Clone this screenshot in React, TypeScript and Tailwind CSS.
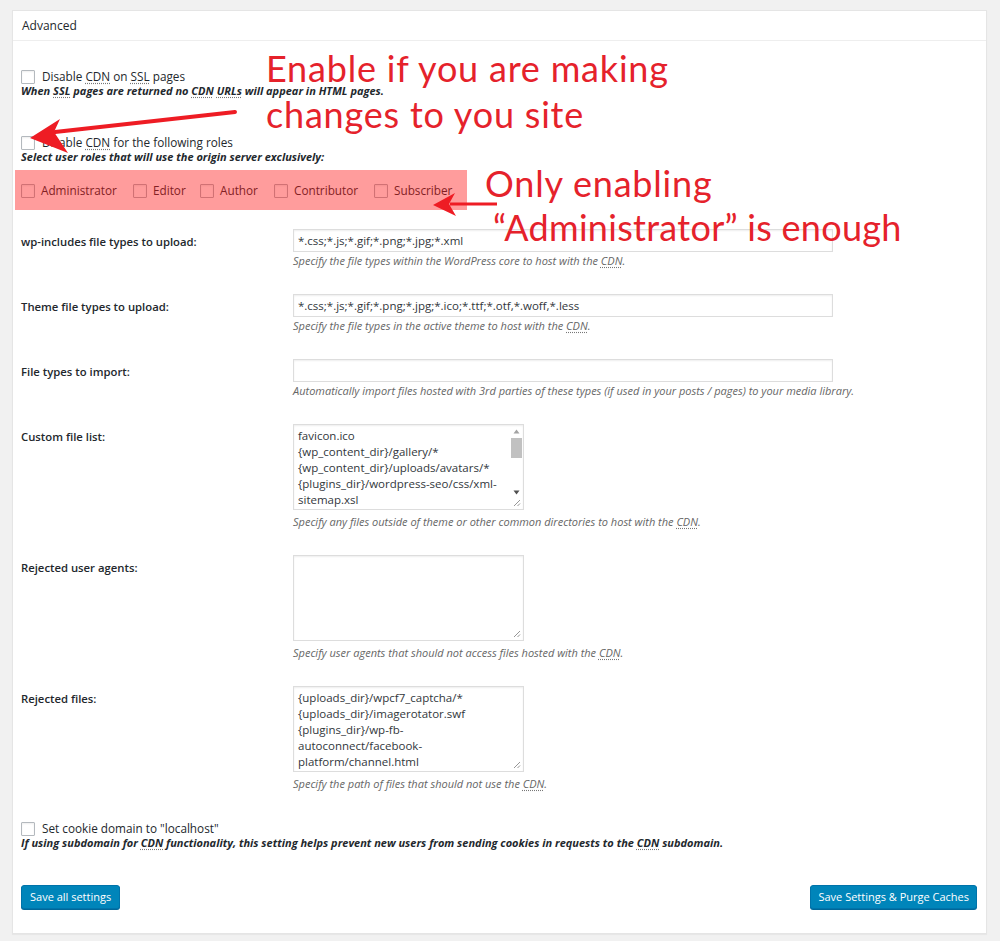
import type { ReactNode } from 'react'

const UI_FONT = '[font-family:"Open_Sans","Noto_Sans",sans-serif]'

function Abbr({ children }: { children: ReactNode }) {
  return <span className="underline decoration-dotted decoration-[#777] underline-offset-2">{children}</span>
}

function Checkbox() {
  return <span className="inline-block h-[14px] w-[14px] shrink-0 rounded-[1px] border border-[#b4b9be] bg-white shadow-[inset_0_1px_2px_rgba(0,0,0,0.07)]" />
}

function Grip() {
  return (
    <svg className="absolute bottom-[2px] right-[2px]" width="8" height="8" viewBox="0 0 8 8">
      <path d="M7 1 L1 7 M7 4.5 L4.5 7" stroke="#8a8a8a" strokeWidth="0.9" />
    </svg>
  )
}

interface Row {
  label: string
  value?: string
  lines?: string[]
  scroll?: boolean
  desc: ReactNode
}

const ROWS: Row[] = [
  {
    label: 'wp-includes file types to upload:',
    value: '*.css;*.js;*.gif;*.png;*.jpg;*.xml',
    desc: <>Specify the file types within the WordPress core to host with the <Abbr>CDN</Abbr>.</>,
  },
  {
    label: 'Theme file types to upload:',
    value: '*.css;*.js;*.gif;*.png;*.jpg;*.ico;*.ttf;*.otf,*.woff,*.less',
    desc: <>Specify the file types in the active theme to host with the <Abbr>CDN</Abbr>.</>,
  },
  {
    label: 'File types to import:',
    value: '',
    desc: 'Automatically import files hosted with 3rd parties of these types (if used in your posts / pages) to your media library.',
  },
  {
    label: 'Custom file list:',
    lines: ['favicon.ico', '{wp_content_dir}/gallery/*', '{wp_content_dir}/uploads/avatars/*', '{plugins_dir}/wordpress-seo/css/xml-', 'sitemap.xsl'],
    scroll: true,
    desc: <>Specify any files outside of theme or other common directories to host with the <Abbr>CDN</Abbr>.</>,
  },
  {
    label: 'Rejected user agents:',
    lines: [],
    desc: <>Specify user agents that should not access files hosted with the <Abbr>CDN</Abbr>.</>,
  },
  {
    label: 'Rejected files:',
    lines: ['{uploads_dir}/wpcf7_captcha/*', '{uploads_dir}/imagerotator.swf', '{plugins_dir}/wp-fb-', 'autoconnect/facebook-', 'platform/channel.html'],
    desc: <>Specify the path of files that should not use the <Abbr>CDN</Abbr>.</>,
  },
]

const ROLES = [
  { name: 'Administrator', w: 'w-[112px]' },
  { name: 'Editor', w: 'w-[67px]' },
  { name: 'Author', w: 'w-[74px]' },
  { name: 'Contributor', w: 'w-[100px]' },
  { name: 'Subscriber', w: 'w-[90px]' },
]

function Field({ row }: { row: Row }) {
  if (row.lines) {
    return (
      <div>
        <div className="relative flex h-[86px] w-[231px] border border-[#ddd] bg-white shadow-[inset_0_1px_2px_rgba(0,0,0,0.07)]">
          <div className="flex-1 overflow-hidden whitespace-nowrap px-[4px] pt-[3px] text-[11.5px] leading-[16px] text-[#32373c]">
            {row.lines.map(l => <div key={l}>{l}</div>)}
          </div>
          {row.scroll && (
            <div className="flex w-[13px] flex-col items-center pt-[4px] pb-[14px]">
              <svg width="7" height="5" viewBox="0 0 7 5"><path d="M3.5 0.5 L6.5 4.5 L0.5 4.5 Z" fill="#a3a3a3" /></svg>
              <div className="mt-[4px] h-[20px] w-[11px] bg-[#c1c1c1]" />
              <div className="flex-1" />
              <svg width="7" height="5" viewBox="0 0 7 5"><path d="M0.5 0.5 L6.5 0.5 L3.5 4.5 Z" fill="#505050" /></svg>
            </div>
          )}
          <Grip />
        </div>
        <p className="mt-[3px] text-[11px] italic leading-[18px] text-[#666]">{row.desc}</p>
      </div>
    )
  }
  return (
    <div>
      <div className="flex h-[23px] w-[540px] items-center border border-[#ddd] bg-white px-[4px] text-[11.5px] text-[#32373c] shadow-[inset_0_1px_2px_rgba(0,0,0,0.07)]">
        {row.value}
      </div>
      <p className="text-[11px] italic leading-[18px] text-[#666]">{row.desc}</p>
    </div>
  )
}

export default function App() {
  return (
    <div className={`relative min-h-[941px] bg-[#f1f1f1] px-[12px] pt-[10px] pb-[6px] ${UI_FONT} text-[#23282d]`}>
      <div className="w-[975px] border border-[#e5e5e5] bg-white shadow-[0_1px_1px_rgba(0,0,0,0.04)]">
        <div className="flex h-[30px] items-center border-b border-[#eee] px-[9px] pt-[1px] text-[12px] text-[#23282d]">
          Advanced
        </div>

        <div className="px-[8px] pb-[24px]">
          {/* SSL option */}
          <div className="mt-[27px] flex h-[17px] items-center gap-[7px] text-[11.75px]">
            <Checkbox />
            <span>Disable <Abbr>CDN</Abbr> on <Abbr>SSL</Abbr> pages</span>
          </div>
          <p className="-mt-[2px] text-[11px] font-bold italic leading-[15px]">
            When <Abbr>SSL</Abbr> pages are returned no <Abbr>CDN</Abbr> <Abbr>URLs</Abbr> will appear in HTML pages.
          </p>

          {/* roles option */}
          <div className="mt-[36px] flex h-[17px] items-center gap-[7px] text-[11.75px]">
            <Checkbox />
            <span>Disable <Abbr>CDN</Abbr> for the following roles</span>
          </div>
          <p className="-mt-[2px] text-[11px] font-bold italic leading-[15px]">
            Select user roles that will use the origin server exclusively:
          </p>

          <div className="relative mt-[17px] flex h-[20px] items-center text-[11.75px] text-[#32373c]">
            {ROLES.map(r => (
              <label key={r.name} className={`flex shrink-0 items-center gap-[6px] ${r.w}`}>
                <Checkbox />
                <span>{r.name}</span>
              </label>
            ))}
            <div className="absolute left-[-6px] top-[-11px] h-[40px] w-[452px] bg-[rgba(255,0,0,0.39)]" />
          </div>

          {/* form table */}
          <div className="mt-[16px]">
            {ROWS.map(row => (
              <div key={row.label} className="flex py-3">
                <div className="w-[272px] shrink-0 pt-[4px] text-[11.3px] font-semibold leading-[18px]">{row.label}</div>
                <Field row={row} />
              </div>
            ))}
          </div>

          <div className="mt-[15px] flex h-[17px] items-center gap-[7px] text-[11.75px]">
            <Checkbox />
            <span>Set cookie domain to "localhost"</span>
          </div>
          <p className="-mt-[2px] text-[11px] font-bold italic leading-[15px]">
            If using subdomain for <Abbr>CDN</Abbr> functionality, this setting helps prevent new users from sending cookies in requests to the <Abbr>CDN</Abbr> subdomain.
          </p>

          <div className="mt-[35px] flex items-center justify-between pr-[1px]">
            <button className="h-[24px] rounded-[3px] border border-[#0073aa] bg-[#0085ba] px-[8px] text-[11px] text-white shadow-[0_1px_0_#006799]">
              Save all settings
            </button>
            <button className="h-[24px] rounded-[3px] border border-[#0073aa] bg-[#0085ba] px-[7px] text-[11px] text-white shadow-[0_1px_0_#006799]">
              Save Settings &amp; Purge Caches
            </button>
          </div>
        </div>
      </div>

      {/* annotations */}
      <div className="pointer-events-none absolute left-[266px] top-[53px] [font-family:Lato,sans-serif] text-[36px] tracking-[0.8px] text-[#e5222b]">
        <div className="leading-[30px]">Enable if you are making</div>
        <div className="mt-[17px] leading-[28px]">changes to you site</div>
      </div>
      <div className="pointer-events-none absolute left-[485px] top-[165px] [font-family:Lato,sans-serif] text-[36px] text-[#e5222b]">
        <div className="leading-[36px] tracking-[0.8px]">Only enabling</div>
        <div className="ml-[8px] mt-[8px] leading-[36px] tracking-[0.3px]">“Administrator” is enough</div>
      </div>
      <svg className="pointer-events-none absolute left-0 top-0" width="1000" height="941" viewBox="0 0 1000 941">
        <path d="M235 112 L55 132" stroke="#ee1c24" strokeWidth="4" strokeLinecap="round" />
        <polygon points="30,138 60,119 54,132 68,153" fill="#ee1c24" />
        <path d="M497 204 L450 204" stroke="#ee1c24" strokeWidth="3" />
        <polygon points="433,205 455,193 449,204 456,216" fill="#ee1c24" />
      </svg>
    </div>
  )
}
